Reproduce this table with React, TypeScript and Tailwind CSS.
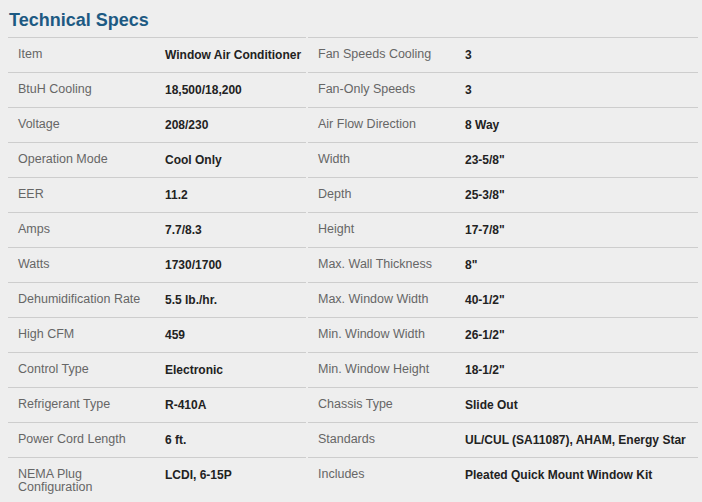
import React from "react";

const rows: [string, string, string, string][] = [
  ["Item", "Window Air Conditioner", "Fan Speeds Cooling", "3"],
  ["BtuH Cooling", "18,500/18,200", "Fan-Only Speeds", "3"],
  ["Voltage", "208/230", "Air Flow Direction", "8 Way"],
  ["Operation Mode", "Cool Only", "Width", "23-5/8\""],
  ["EER", "11.2", "Depth", "25-3/8\""],
  ["Amps", "7.7/8.3", "Height", "17-7/8\""],
  ["Watts", "1730/1700", "Max. Wall Thickness", "8\""],
  ["Dehumidification Rate", "5.5 lb./hr.", "Max. Window Width", "40-1/2\""],
  ["High CFM", "459", "Min. Window Width", "26-1/2\""],
  ["Control Type", "Electronic", "Min. Window Height", "18-1/2\""],
  ["Refrigerant Type", "R-410A", "Chassis Type", "Slide Out"],
  ["Power Cord Length", "6 ft.", "Standards", "UL/CUL (SA11087), AHAM, Energy Star"],
  ["NEMA Plug Configuration", "LCDI, 6-15P", "Includes", "Pleated Quick Mount Window Kit"],
];

function Half({ label, value, width }: { label: string; value: string; width: string }) {
  return (
    <div className={`flex border-t border-[#cdcdcd] min-h-[35px] pt-[10px] pb-[8px] ${width}`}>
      <div className="w-[157px] shrink-0 pl-[10px] pr-[8px] text-[12.5px] leading-[13px] text-[#666666]">
        {label}
      </div>
      <div className="flex-1 text-[12px] leading-[13px] font-bold text-[#222222] pt-[1px]">{value}</div>
    </div>
  );
}

export default function App() {
  return (
    <div
      className="w-[702px] h-[502px] bg-[#eeeeee] overflow-hidden"
      style={{ fontFamily: '"Liberation Sans", Arial, sans-serif' }}
    >
      <h2 className="pl-[9px] pt-[9px] h-[37px] text-[18px] leading-[22px] font-bold text-[#1d5a83]">
        Technical Specs
      </h2>
      <div className="pl-[8px] flex flex-col">
        {rows.map((r, i) => (
          <div key={i} className="flex gap-[2px]">
            <Half label={r[0]} value={r[1]} width="w-[298px]" />
            <Half label={r[2]} value={r[3]} width="w-[390px]" />
          </div>
        ))}
      </div>
    </div>
  );
}
